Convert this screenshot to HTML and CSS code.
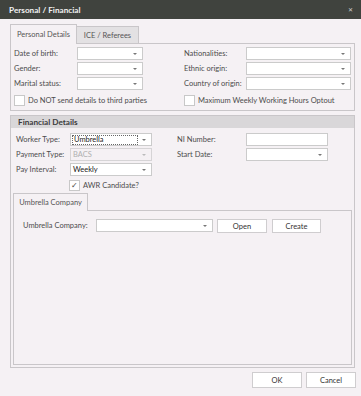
FILE: index.html
```html
<!DOCTYPE html>
<html lang="en">
<head>
  <meta charset="UTF-8">
  <title>Personal / Financial</title>
  <link rel="stylesheet" href="styles.css">
</head>
<body>
  <div class="titlebar">
    <span class="title">Personal / Financial</span>
    <span class="close">&#x2715;</span>
  </div>
  <div class="content">
    <div class="tabs">
      <div class="tab active">Personal Details</div>
      <div class="tab">ICE / Referees</div>
    </div>
    <div class="panel personal">
      <div class="pgrid">
        <label>Date of birth:</label>
        <div class="combo"><span class="val"></span><span class="arrow"></span></div>
        <span></span>
        <label>Nationalities:</label>
        <div class="combo"><span class="val"></span><span class="arrow"></span></div>

        <label>Gender:</label>
        <div class="combo"><span class="val"></span><span class="arrow"></span></div>
        <span></span>
        <label>Ethnic origin:</label>
        <div class="combo"><span class="val"></span><span class="arrow"></span></div>

        <label>Marital status:</label>
        <div class="combo"><span class="val"></span><span class="arrow"></span></div>
        <span></span>
        <label>Country of origin:</label>
        <div class="combo"><span class="val"></span><span class="arrow"></span></div>
      </div>
      <div class="checks">
        <div class="check"><span class="box"></span>Do NOT send details to third parties</div>
        <div class="check"><span class="box"></span>Maximum Weekly Working Hours Optout</div>
      </div>
    </div>

    <div class="group">
      <div class="group-header">Financial Details</div>
      <div class="group-body">
        <div class="fgrid">
          <label>Worker Type:</label>
          <div class="combo focus"><span class="val">Umbrella</span><span class="arrow"></span></div>
          <span></span>
          <label>NI Number:</label>
          <div class="combo"><span class="val"></span></div>

          <label>Payment Type:</label>
          <div class="combo disabled"><span class="val">BACS</span><span class="arrow"></span></div>
          <span></span>
          <label>Start Date:</label>
          <div class="combo"><span class="val"></span><span class="arrow"></span></div>

          <label>Pay Interval:</label>
          <div class="combo"><span class="val">Weekly</span><span class="arrow"></span></div>
        </div>
        <div class="check awr"><span class="box checked">&#x2713;</span>AWR Candidate?</div>

        <div class="subtabs">
          <div class="tab active">Umbrella Company</div>
        </div>
        <div class="subpanel">
          <div class="urow">
            <label>Umbrella Company:</label>
            <div class="combo wide"><span class="val"></span><span class="arrow"></span></div>
            <button class="btn">Open</button>
            <button class="btn">Create</button>
          </div>
        </div>
      </div>
    </div>

    <div class="footer">
      <button class="btn big">OK</button>
      <button class="btn big">Cancel</button>
    </div>
  </div>
</body>
</html>
```

FILE: styles.css
```css
* {
  box-sizing: border-box;
}
body {
  margin: 0;
  width: 361px;
  height: 396px;
  background: #f5f1f4;
  font-family: Lato, 'Open Sans', sans-serif;
  font-size: 7.5px;
  color: #4c4c4c;
  overflow: hidden;
}
.titlebar {
  height: 19px;
  background: #40433e;
  display: flex;
  align-items: center;
  padding: 0 8px 0 9px;
}
.title {
  color: #f2f2f2;
  font-weight: bold;
  font-size: 8.2px;
}
.close {
  margin-left: auto;
  color: #d0d0d0;
  font-size: 6px;
}
.content {
  padding: 5px 6px 0 10px;
}
.tabs, .subtabs {
  display: flex;
  align-items: flex-end;
  height: 19px;
}
.tab {
  height: 17px;
  padding: 0 8px;
  display: flex;
  align-items: center;
  background: #e3e1e3;
  border: 1px solid #c9c6c9;
  border-bottom: none;
  color: #555;
}
.tab.active {
  height: 20px;
  margin-bottom: -1px;
  background: #f5f1f4;
  position: relative;
  width: 67px;
  justify-content: center;
  padding: 0;
}
.tabs .tab + .tab {
  border-left: none;
  width: 62px;
  justify-content: center;
  padding: 0;
}
.panel {
  border: 1px solid #c9c6c9;
  height: 68px;
  padding: 3px 3px 0 3px;
}
.pgrid {
  display: grid;
  grid-template-columns: 63px 66px 41px 62px 105px;
  grid-auto-rows: 13px;
  row-gap: 2px;
}
label {
  display: flex;
  align-items: center;
  white-space: nowrap;
}
.combo {
  background: #fff;
  border: 1px solid #cbcbcb;
  display: flex;
  align-items: center;
  padding: 0 5px 0 2px;
  color: #222;
}
.combo .val {
  flex: 1;
  height: 100%;
  display: flex;
  align-items: center;
}
.arrow {
  width: 0;
  height: 0;
  border-left: 2px solid transparent;
  border-right: 2px solid transparent;
  border-top: 2px solid #777;
}
.combo.focus {
  padding-left: 1px;
}
.combo.focus .val {
  border: 1px dotted #666;
  margin-right: 4px;
  padding-left: 1px;
  height: 10px;
}
.combo.disabled {
  background: #f5f1f4;
  border-color: #d6d4d6;
  color: #b0b0b0;
}
.combo.disabled .arrow {
  border-top-color: #bbb;
}
.checks {
  display: flex;
  margin-top: 5px;
}
.check {
  display: flex;
  align-items: center;
  gap: 3px;
  height: 11px;
  white-space: nowrap;
}
.checks .check:first-child {
  width: 170px;
}
.box {
  width: 11px;
  height: 11px;
  background: #fff;
  border: 1px solid #c8c8c8;
  display: flex;
  align-items: center;
  justify-content: center;
  font-size: 8px;
  color: #444;
}
.group {
  margin-top: 4px;
  height: 253px;
  border: 1px solid #c9c6c9;
  display: flex;
  flex-direction: column;
}
.group-header {
  height: 12px;
  background: #d9d7d9;
  font-weight: bold;
  color: #3c3c3c;
  display: flex;
  align-items: center;
  padding-left: 7px;
  font-size: 8.2px;
}
.group-body {
  flex: 1;
  display: flex;
  flex-direction: column;
  padding: 5px 2px 2px 2px;
}
.fgrid {
  display: grid;
  grid-template-columns: 54px 82px 25px 69px 82px;
  grid-auto-rows: 13px;
  row-gap: 2px;
  padding-left: 3px;
}
.awr {
  margin: 3px 0 0 56px;
  height: 12px;
}
.subtabs {
  margin-top: 2px;
  height: 17px;
}
.subtabs .tab.active {
  width: 75px;
  height: 18px;
}
.subpanel {
  flex: 1;
  border: 1px solid #c9c6c9;
  padding: 8px 9px 0 9px;
}
.urow {
  display: grid;
  grid-template-columns: 69px 117px 50px 50px;
  column-gap: 4px;
  grid-template-rows: 13px;
}
.urow label {
  margin-right: -4px;
}
.btn {
  font-family: inherit;
  font-size: 7.5px;
  color: #333;
  background: #fff;
  border: 1px solid #cfcdcf;
  padding: 0;
  height: 14px;
}
.urow .btn:last-child {
  margin-left: 1px;
}
.footer {
  display: flex;
  justify-content: flex-end;
  gap: 4px;
  margin-top: 4px;
  margin-right: -1px;
}
.btn.big {
  width: 50px;
  height: 16px;
}
```
